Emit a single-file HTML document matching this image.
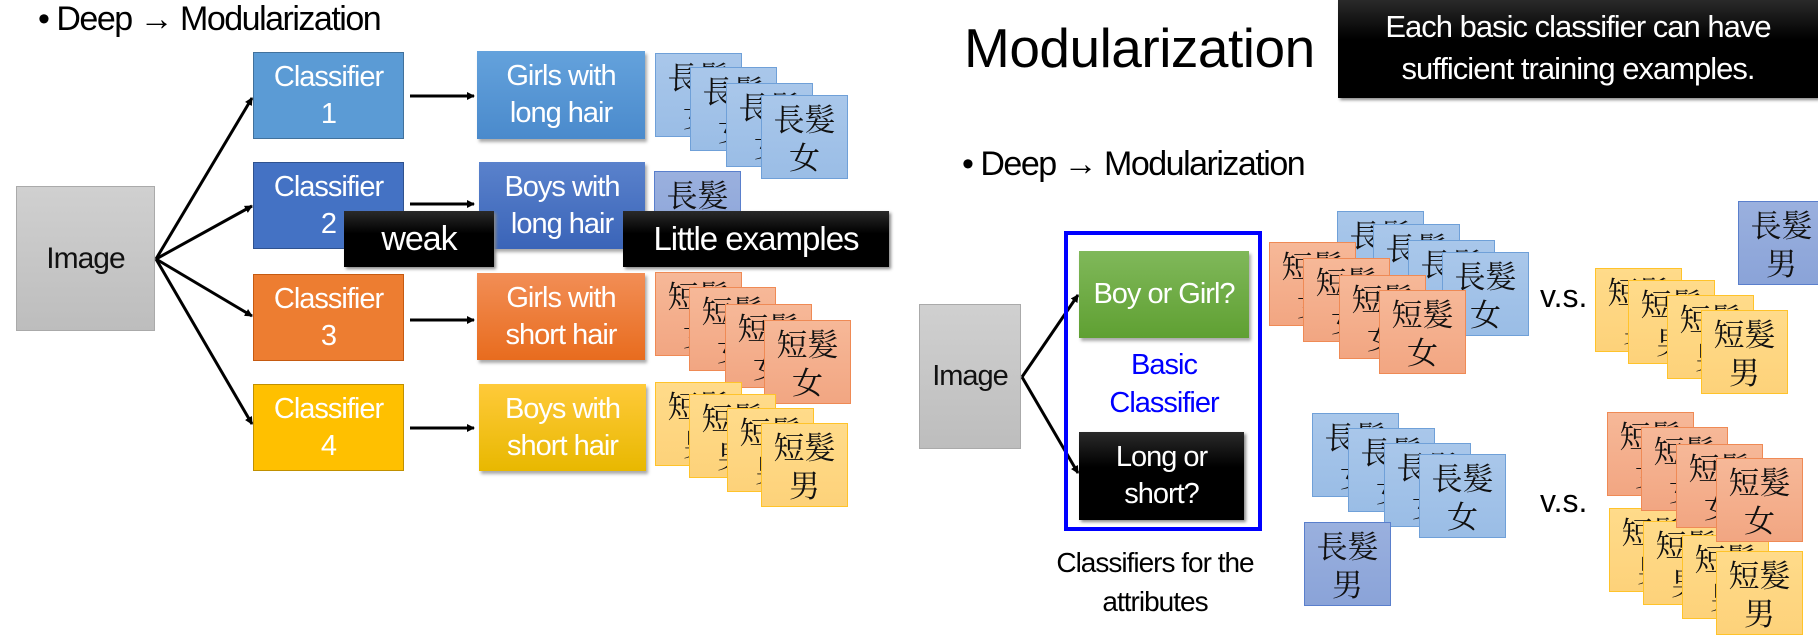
<!DOCTYPE html>
<html><head><meta charset="utf-8"><style>
body{margin:0;width:1818px;height:638px;background:#fff;position:relative;overflow:hidden;font-family:"Liberation Sans","Noto Sans CJK SC",sans-serif}
.a{position:absolute;white-space:nowrap}
.bx{position:absolute;color:#fff;font-size:29px;line-height:37px;text-align:center;display:flex;flex-direction:column;justify-content:center;box-sizing:border-box;letter-spacing:-1px;white-space:nowrap}
.c{position:absolute;width:87px;height:84px;box-sizing:border-box;border:1.5px solid;font-family:"Noto Serif CJK SC","Noto Sans CJK SC",serif;font-size:31px;line-height:38px;text-align:center;padding-top:3px;color:#111}
.b{background:linear-gradient(#a9c7ea,#9abde6);border-color:#6fa0d8}
.o{background:linear-gradient(#f6b898,#f2a682);border-color:#ef8a55}
.y{background:linear-gradient(#ffdb8a,#fdd27a);border-color:#ffc32a}
.p{background:linear-gradient(#9ab0de,#8aa3d8);border-color:#5a7fcc}
.k{position:absolute;background:linear-gradient(#2a2a2a,#000 40%);color:#fff;text-align:center;box-sizing:border-box;box-shadow:2px 2px 3px #888;white-space:nowrap;letter-spacing:-1px}
</style></head><body>
<div class="a" style="left:38px;top:0px;font-size:34px;letter-spacing:-1.5px">• Deep → Modularization</div>

<div class="bx" style="left:16px;top:186px;width:139px;height:145px;background:linear-gradient(#d0d0d0,#bdbdbd);border:1px solid #aaa;color:#111;font-size:30px">Image</div>

<div class="bx" style="left:253px;top:52px;width:151px;height:87px;background:#5b9bd5;border:1px solid #41719c">Classifier<br>1</div>
<div class="bx" style="left:253px;top:162px;width:151px;height:87px;background:#4472c4;border:1px solid #2f528f">Classifier<br>2</div>
<div class="bx" style="left:253px;top:274px;width:151px;height:87px;background:#ed7d31;border:1px solid #c55a11">Classifier<br>3</div>
<div class="bx" style="left:253px;top:384px;width:151px;height:87px;background:#ffc000;border:1px solid #c09000">Classifier<br>4</div>

<div class="bx" style="left:477px;top:51px;width:168px;height:88px;background:linear-gradient(#64a2dc,#4a8acc);box-shadow:2px 3px 3px #aaa">Girls with<br>long hair</div>
<div class="bx" style="left:479px;top:162px;width:166px;height:87px;background:linear-gradient(#5a82cc,#3a64b8);box-shadow:2px 3px 3px #aaa">Boys with<br>long hair</div>
<div class="bx" style="left:477px;top:273px;width:168px;height:87px;background:linear-gradient(#f28e56,#e86c1e);box-shadow:2px 3px 3px #aaa">Girls with<br>short hair</div>
<div class="bx" style="left:479px;top:384px;width:167px;height:87px;background:linear-gradient(#ffca3a,#e8b800);box-shadow:2px 3px 3px #aaa">Boys with<br>short hair</div>

<svg class="a" style="left:0;top:0" width="1818" height="638">
<defs><marker id="m" markerWidth="8" markerHeight="8" refX="7" refY="4" orient="auto" markerUnits="userSpaceOnUse"><path d="M0,0 L8,4 L0,8 z" fill="#000"/></marker></defs>
<g stroke="#000" stroke-width="3" fill="none" marker-end="url(#m)">
<line x1="156" y1="259" x2="252" y2="98"/>
<line x1="156" y1="259" x2="252" y2="206"/>
<line x1="156" y1="259" x2="252" y2="316"/>
<line x1="156" y1="259" x2="252" y2="424"/>
<line x1="410" y1="96" x2="474" y2="96"/>
<line x1="410" y1="204" x2="474" y2="204"/>
<line x1="410" y1="320" x2="474" y2="320"/>
<line x1="410" y1="428" x2="474" y2="428"/>
<line x1="1022" y1="377" x2="1078" y2="295"/>
<line x1="1022" y1="377" x2="1078" y2="473"/>
</g></svg>

<div class="c b" style="left:655px;top:53px">長髮<br>女</div>
<div class="c b" style="left:690px;top:67px">長髮<br>女</div>
<div class="c b" style="left:726px;top:83px">長髮<br>女</div>
<div class="c b" style="left:761px;top:95px">長髮<br>女</div>

<div class="c p" style="left:654px;top:171px">長髮<br>男</div>

<div class="c o" style="left:655px;top:272px">短髮<br>女</div>
<div class="c o" style="left:689px;top:287px">短髮<br>女</div>
<div class="c o" style="left:725px;top:304px">短髮<br>女</div>
<div class="c o" style="left:764px;top:320px">短髮<br>女</div>

<div class="c y" style="left:655px;top:382px">短髮<br>男</div>
<div class="c y" style="left:689px;top:394px">短髮<br>男</div>
<div class="c y" style="left:727px;top:408px">短髮<br>男</div>
<div class="c y" style="left:761px;top:423px">短髮<br>男</div>

<div class="k" style="left:344px;top:211px;width:150px;height:56px;font-size:34px;line-height:56px">weak</div>
<div class="k" style="left:623px;top:211px;width:266px;height:56px;font-size:33px;line-height:56px">Little examples</div>

<div class="a" style="left:964px;top:16px;font-size:55px;letter-spacing:-0.5px">Modularization</div>
<div class="k" style="left:1338px;top:0;width:480px;height:98px;font-size:31px;line-height:42px;padding-top:6px">Each basic classifier can have<br>sufficient training examples.</div>

<div class="a" style="left:962px;top:145px;font-size:34px;letter-spacing:-1.5px">• Deep → Modularization</div>

<div class="bx" style="left:919px;top:304px;width:102px;height:145px;background:linear-gradient(#d0d0d0,#bdbdbd);border:1px solid #aaa;color:#111;font-size:29px">Image</div>
<div class="a" style="left:1064px;top:231px;width:190px;height:292px;border:4px solid #0000ff"></div>
<div class="bx" style="left:1079px;top:251px;width:170px;height:87px;background:linear-gradient(#80b85a,#5fa032);box-shadow:2px 3px 3px #aaa;font-size:29px">Boy or Girl?</div>
<div class="a" style="left:1079px;top:346px;width:170px;text-align:center;color:#0000ff;font-size:29px;line-height:38px;letter-spacing:-1px">Basic<br>Classifier</div>
<div class="k" style="left:1079px;top:432px;width:165px;height:88px;font-size:29px;line-height:37px;padding-top:7px">Long or<br>short?</div>
<div class="a" style="left:1030px;top:543px;width:250px;text-align:center;font-size:28px;line-height:39px;letter-spacing:-1px">Classifiers for the<br>attributes</div>

<div class="c b" style="left:1337px;top:211px">長髮<br>女</div>
<div class="c b" style="left:1373px;top:224px">長髮<br>女</div>
<div class="c b" style="left:1408px;top:240px">長髮<br>女</div>
<div class="c b" style="left:1442px;top:252px">長髮<br>女</div>
<div class="c o" style="left:1269px;top:242px">短髮<br>女</div>
<div class="c o" style="left:1303px;top:258px">短髮<br>女</div>
<div class="c o" style="left:1339px;top:275px">短髮<br>女</div>
<div class="c o" style="left:1379px;top:290px">短髮<br>女</div>

<div class="a" style="left:1540px;top:278px;font-size:32px">v.s.</div>
<div class="c y" style="left:1595px;top:268px">短髮<br>男</div>
<div class="c y" style="left:1628px;top:280px">短髮<br>男</div>
<div class="c y" style="left:1667px;top:295px">短髮<br>男</div>
<div class="c y" style="left:1701px;top:310px">短髮<br>男</div>
<div class="c p" style="left:1738px;top:201px">長髮<br>男</div>

<div class="c b" style="left:1312px;top:413px">長髮<br>女</div>
<div class="c b" style="left:1348px;top:428px">長髮<br>女</div>
<div class="c b" style="left:1384px;top:443px">長髮<br>女</div>
<div class="c b" style="left:1419px;top:454px">長髮<br>女</div>
<div class="c p" style="left:1304px;top:522px">長髮<br>男</div>

<div class="a" style="left:1540px;top:483px;font-size:32px">v.s.</div>
<div class="c y" style="left:1609px;top:508px">短髮<br>男</div>
<div class="c y" style="left:1643px;top:521px">短髮<br>男</div>
<div class="c y" style="left:1682px;top:535px">短髮<br>男</div>
<div class="c y" style="left:1716px;top:551px">短髮<br>男</div>
<div class="c o" style="left:1607px;top:412px">短髮<br>女</div>
<div class="c o" style="left:1641px;top:427px">短髮<br>女</div>
<div class="c o" style="left:1676px;top:444px">短髮<br>女</div>
<div class="c o" style="left:1716px;top:458px">短髮<br>女</div>
</body></html>
